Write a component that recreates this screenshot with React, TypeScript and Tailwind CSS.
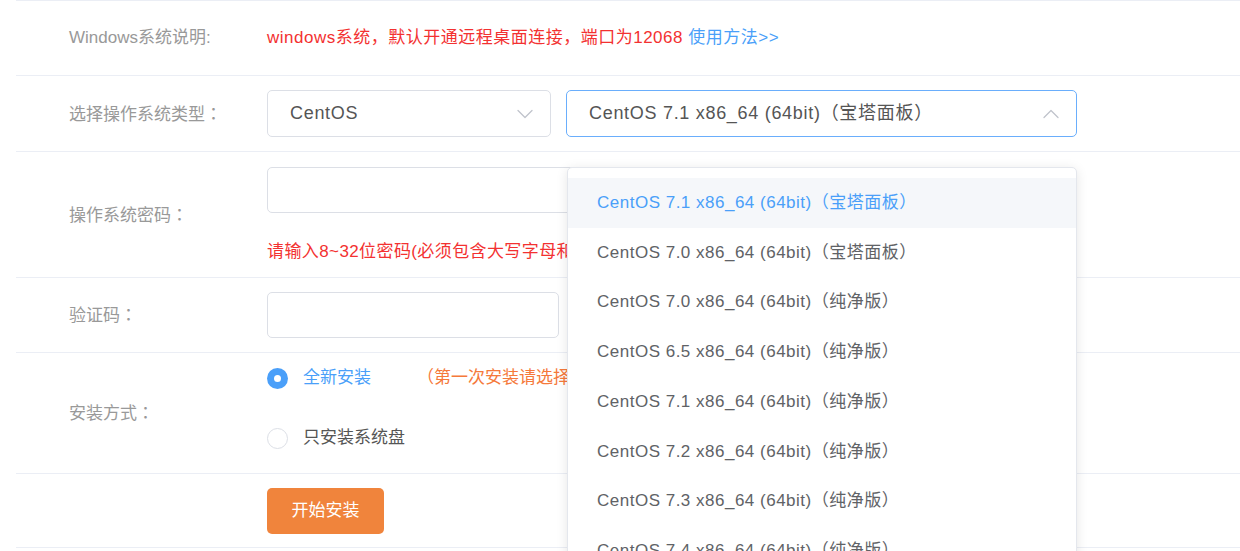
import React from "react";

const FONT = "[font-family:'Liberation_Sans','Noto_Sans_CJK_SC',sans-serif]";

const options = [
  "CentOS 7.1 x86_64 (64bit)（宝塔面板）",
  "CentOS 7.0 x86_64 (64bit)（宝塔面板）",
  "CentOS 7.0 x86_64 (64bit)（纯净版）",
  "CentOS 6.5 x86_64 (64bit)（纯净版）",
  "CentOS 7.1 x86_64 (64bit)（纯净版）",
  "CentOS 7.2 x86_64 (64bit)（纯净版）",
  "CentOS 7.3 x86_64 (64bit)（纯净版）",
  "CentOS 7.4 x86_64 (64bit)（纯净版）",
];

const Chevron = ({ up }: { up?: boolean }) => (
  <svg width="16" height="10" viewBox="0 0 16 10" fill="none" className="shrink-0">
    <path
      d={up ? "M1 8.5 L8 1.5 L15 8.5" : "M1 1.5 L8 8.5 L15 1.5"}
      stroke="#c0c4cc"
      strokeWidth="1.3"
      strokeLinecap="round"
      strokeLinejoin="round"
    />
  </svg>
);

// label text; a trailing full-width colon is drawn centred like the original
const Row = ({ label, colon, className, children }: { label: string; colon?: boolean; className?: string; children: React.ReactNode }) => (
  <div className={`flex items-center border-b border-[#ebeef5] ${className ?? ""}`}>
    <div className="w-[251px] shrink-0 pl-[53px] text-[17px] leading-6 text-[#999]">
      {label}
      {colon && <span className="[font-family:'Noto_Sans_CJK_TC',sans-serif]">：</span>}
    </div>
    <div className="flex-1">{children}</div>
  </div>
);

export default function App() {
  return (
    <div className={`relative h-[551px] w-full overflow-hidden bg-white ${FONT}`}>
      <div className="border-t border-[#ebeef5] ml-4">
        <Row label="Windows系统说明:" className="h-[75px]">
          <p className="text-[17px] leading-6 tracking-[0.5px] text-[#f33131]">
            windows系统，默认开通远程桌面连接，端口为12068{" "}
            <span className="text-[#4a9ff9]">使用方法&gt;&gt;</span>
          </p>
        </Row>

        <Row label="选择操作系统类型" colon className="h-[76px]">
          <div className="flex gap-[15px]">
            <div className="flex h-[47px] w-[284px] items-center justify-between rounded-[5px] border border-[#dcdfe6] pl-[22px] pr-[17px]">
              <span className="text-[18px] tracking-[0.7px] text-[#555]">CentOS</span>
              <Chevron />
            </div>
            <div className="flex h-[47px] w-[511px] items-center justify-between rounded-[5px] border border-[#6aaefc] pl-[22px] pr-[17px]">
              <span className="text-[18px] tracking-[0.7px] text-[#555]">CentOS 7.1 x86_64 (64bit)（宝塔面板）</span>
              <Chevron up />
            </div>
          </div>
        </Row>

        <Row label="操作系统密码" colon className="h-[126px]">
          <div className="flex flex-col pt-[1px]">
            <div className="h-[46px] w-[420px] rounded-[5px] border border-[#dcdfe6]" />
            <p className="mt-[27px] text-[17px] leading-6 tracking-[0.4px] text-[#f33131]">
              请输入8~32位密码(必须包含大写字母和小写字母及数字)
            </p>
          </div>
        </Row>

        <Row label="验证码" colon className="h-[75px]">
          <div className="h-[46px] w-[292px] rounded-[5px] border border-[#dcdfe6]" />
        </Row>

        <Row label="安装方式" colon className="h-[121px]">
          <div className="flex flex-col gap-[36px] pb-[10px]">
            <label className="flex h-6 items-center">
              <span className="flex h-[21px] w-[21px] items-center justify-center rounded-full bg-[#4a9ff9]">
                <span className="h-[7px] w-[7px] rounded-full bg-white" />
              </span>
              <span className="ml-[15px] text-[17px] text-[#4a9ff9]">全新安装</span>
              <span className="ml-[46px] text-[17px] text-[#f5793b]">（第一次安装请选择此项）</span>
            </label>
            <label className="flex h-6 items-center">
              <span className="h-[21px] w-[21px] rounded-full border border-[#dcdfe6] bg-white" />
              <span className="ml-[15px] text-[17px] text-[#555]">只安装系统盘</span>
            </label>
          </div>
        </Row>

        <Row label="" className="h-[74px]">
          <button className="h-[46px] w-[117px] rounded-[5px] bg-[#f0843c] text-[17px] text-white">开始安装</button>
        </Row>
      </div>

      {/* dropdown panel */}
      <div className="absolute left-[567px] top-[167px] w-[510px] rounded-[5px] border border-[#e4e7ed] bg-white py-[10px] shadow-[0_2px_12px_rgba(0,0,0,0.1)]">
        {options.map((o, i) => (
          <div
            key={o}
            className={`flex h-[49.7px] items-center pl-[29px] text-[17px] tracking-[0.5px] ${
              i === 0 ? "bg-[#f5f7fa] text-[#4a9ff9]" : "text-[#606266]"
            }`}
          >
            {o}
          </div>
        ))}
      </div>
    </div>
  );
}
